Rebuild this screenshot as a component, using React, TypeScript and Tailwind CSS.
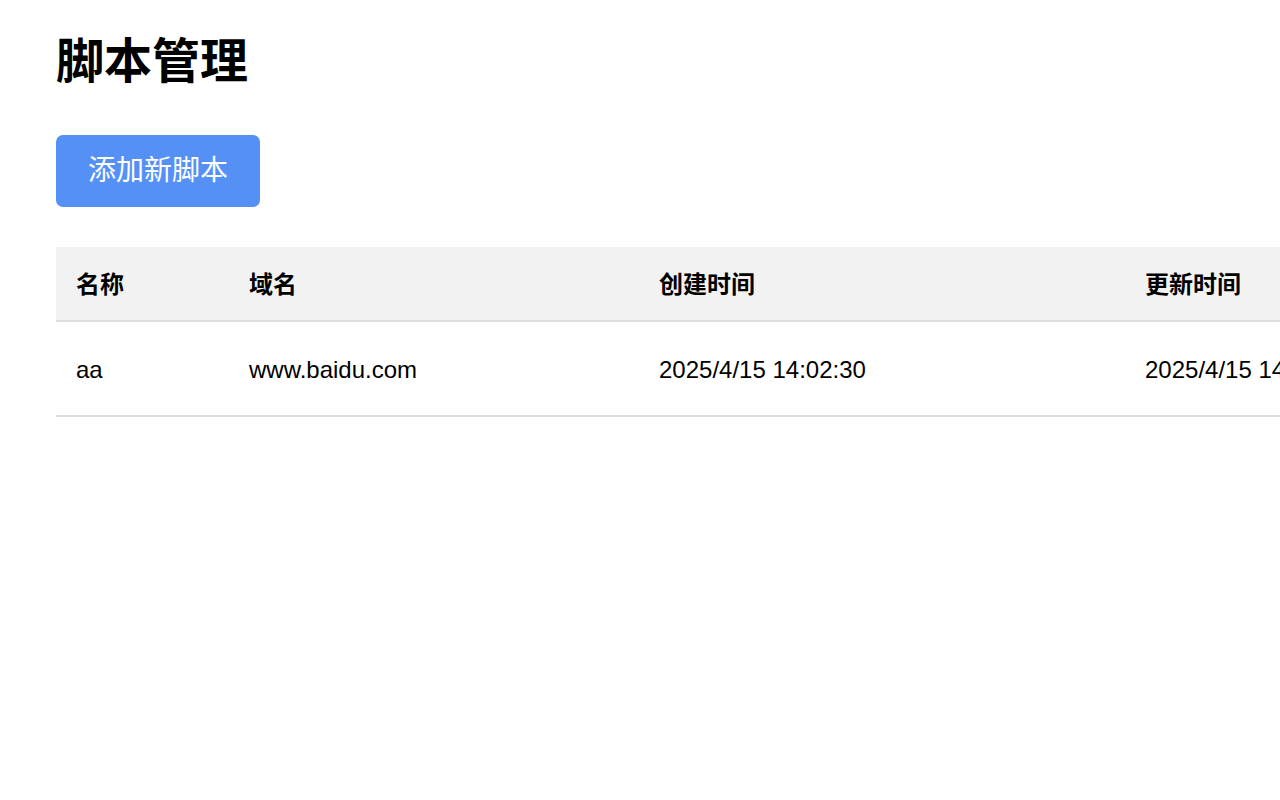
export default function App() {
  const rows = [
    {
      name: "aa",
      domain: "www.baidu.com",
      created: "2025/4/15 14:02:30",
      updated: "2025/4/15 14:02:30",
    },
  ];

  return (
    <div
      className="w-screen min-h-screen overflow-hidden bg-white text-black"
      style={{ fontFamily: '"Liberation Sans", "Noto Sans CJK SC", sans-serif' }}
    >
      <div className="pl-[56px] pt-[34px]">
        <h1 className="text-[48px] leading-[56px] font-bold">脚本管理</h1>

        <button className="mt-[45px] h-[72px] px-[32px] rounded-[7px] bg-[#5591f5] text-white text-[28px] leading-none">
          添加新脚本
        </button>

        <table className="mt-[40px] border-collapse text-[24px] w-[1500px] table-fixed">
          <colgroup>
            <col className="w-[173px]" />
            <col className="w-[410px]" />
            <col className="w-[486px]" />
            <col />
          </colgroup>
          <thead>
            <tr className="bg-[#f2f2f2] border-b-2 border-[#dddddd]">
              <th className="h-[74px] pt-[2px] px-[20px] text-left font-bold">名称</th>
              <th className="h-[74px] pt-[2px] px-[20px] text-left font-bold">域名</th>
              <th className="h-[74px] pt-[2px] px-[20px] text-left font-bold">创建时间</th>
              <th className="h-[74px] pt-[2px] px-[20px] text-left font-bold">更新时间</th>
            </tr>
          </thead>
          <tbody>
            {rows.map((r) => (
              <tr key={r.name} className="border-b-2 border-[#dddddd]">
                <td className="h-[95px] pt-[2px] px-[20px]">{r.name}</td>
                <td className="h-[95px] pt-[2px] px-[20px]">{r.domain}</td>
                <td className="h-[95px] pt-[2px] px-[20px]">{r.created}</td>
                <td className="h-[95px] pt-[2px] px-[20px] whitespace-nowrap">{r.updated}</td>
              </tr>
            ))}
          </tbody>
        </table>
      </div>
    </div>
  );
}
